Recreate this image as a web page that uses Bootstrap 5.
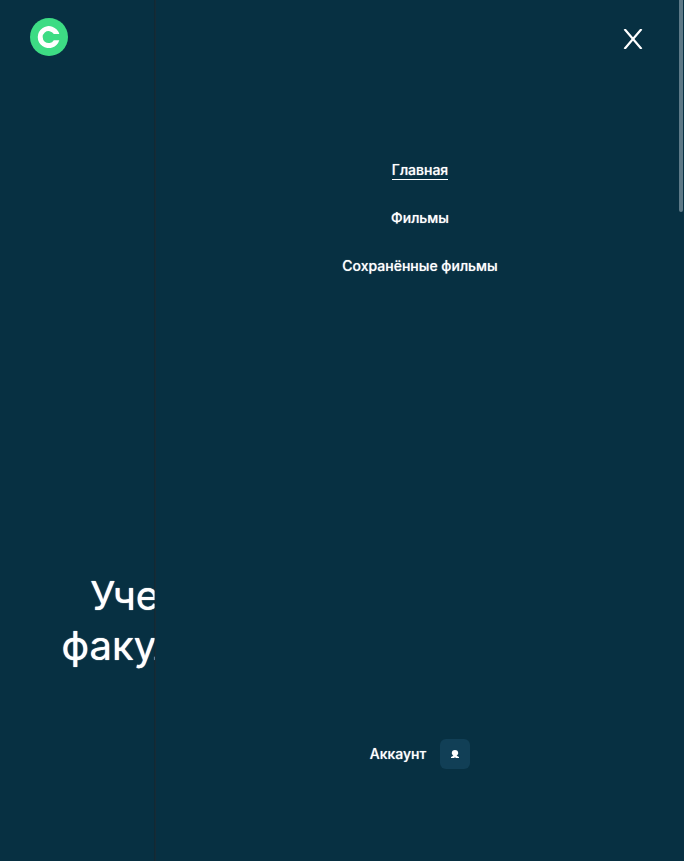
<!DOCTYPE html>
<html lang="ru">
<head>
<meta charset="utf-8">
<meta name="viewport" content="width=device-width, initial-scale=1">
<title>Главная</title>
<link href="https://cdn.jsdelivr.net/npm/bootstrap@5.3.0/dist/css/bootstrap.min.css" rel="stylesheet">
<style>
  body { background: #073042; color: #fff; font-family: Inter, sans-serif; }
  .site-header { padding: 18px 30px; }
  .site-logo { width: 38px; height: 38px; }
  .hero-title { font-size: 40px; line-height: 50px; font-weight: 400; padding-bottom: 190px; text-shadow: 0 0 1px #fff; }
  .side-menu { left: 155px; background: #073042; border-left: 1px solid #142c38; box-shadow: -1px 0 0 rgba(32, 32, 32, .4); padding: 22px 34px 92px 0; }
  .side-menu-inner { margin-right: -34px; }
  .close-btn { width: 34px; height: 34px; }
  .menu-links { gap: 28px; margin-top: 104px; font-size: 14px; line-height: 20px; font-weight: 500; }
  .menu-links a { border-bottom: 1px solid transparent; height: 20px; }
  .menu-links a.active { border-color: #fff; }
  .menu-links, .account { text-shadow: 0 0 1px rgba(255, 255, 255, .6); }
  .account { gap: 14px; font-size: 14px; line-height: 20px; font-weight: 500; }
  .account-icon { width: 30px; height: 30px; border-radius: 6px; background: #113f56; }
  .scroll-thumb { width: 4px; height: 212px; right: 1px; border-radius: 0 0 2px 2px; background: #5d7987; }
</style>
</head>
<body class="vh-100 overflow-hidden position-relative">
<div class="d-flex flex-column h-100">
  <header class="site-header">
    <a href="#" class="d-inline-flex" aria-label="На главную">
      <svg class="site-logo" viewBox="0 0 38 38" aria-hidden="true">
        <circle cx="19" cy="19" r="19" fill="#3ddc84"/>
        <path d="M29.300 16H23.800A6 6 0 1 0 23.800 22.200H29.300A11 11 0 1 1 29.300 16Z" fill="#fff"/>
      </svg>
    </a>
  </header>
  <main class="mt-auto">
    <h1 class="hero-title text-center mb-0">Учебный проект студента<br>факультета Веб-разработки.</h1>
  </main>
</div>
<aside class="side-menu position-absolute top-0 bottom-0 end-0 d-flex flex-column">
  <button type="button" class="close-btn btn p-0 border-0 d-flex align-items-center justify-content-center align-self-end" aria-label="Закрыть меню">
    <svg width="20" height="20" viewBox="0 0 20 20" aria-hidden="true"><path d="M1.500 0L18.500 20M18.500 0L1.500 20" stroke="#fff" stroke-width="2.200"/></svg>
  </button>
  <nav class="side-menu-inner menu-links d-flex flex-column align-items-center">
    <a href="#" class="active text-white text-decoration-none" aria-current="page">Главная</a>
    <a href="#" class="text-white text-decoration-none">Фильмы</a>
    <a href="#" class="text-white text-decoration-none">Сохранённые фильмы</a>
  </nav>
  <a href="#" class="side-menu-inner account mt-auto d-flex align-items-center justify-content-center text-white text-decoration-none">
    Аккаунт
    <span class="account-icon d-flex align-items-center justify-content-center">
      <svg width="8" height="8" viewBox="0 0 8 8" aria-hidden="true"><path d="M4 0C6 0 7.200 1.200 7.200 3C7.200 4.300 6.400 5.100 5.600 5.800L8 7V8H5L4 7.300L3 8H0V7L2.400 5.800C1.600 5.100 .8 4.300 .8 3C.8 1.200 2 0 4 0Z" fill="#fff"/></svg>
    </span>
  </a>
</aside>
<div class="scroll-thumb position-absolute top-0"></div>
<script src="https://cdn.jsdelivr.net/npm/bootstrap@5.3.0/dist/js/bootstrap.bundle.min.js"></script>
</body>
</html>
